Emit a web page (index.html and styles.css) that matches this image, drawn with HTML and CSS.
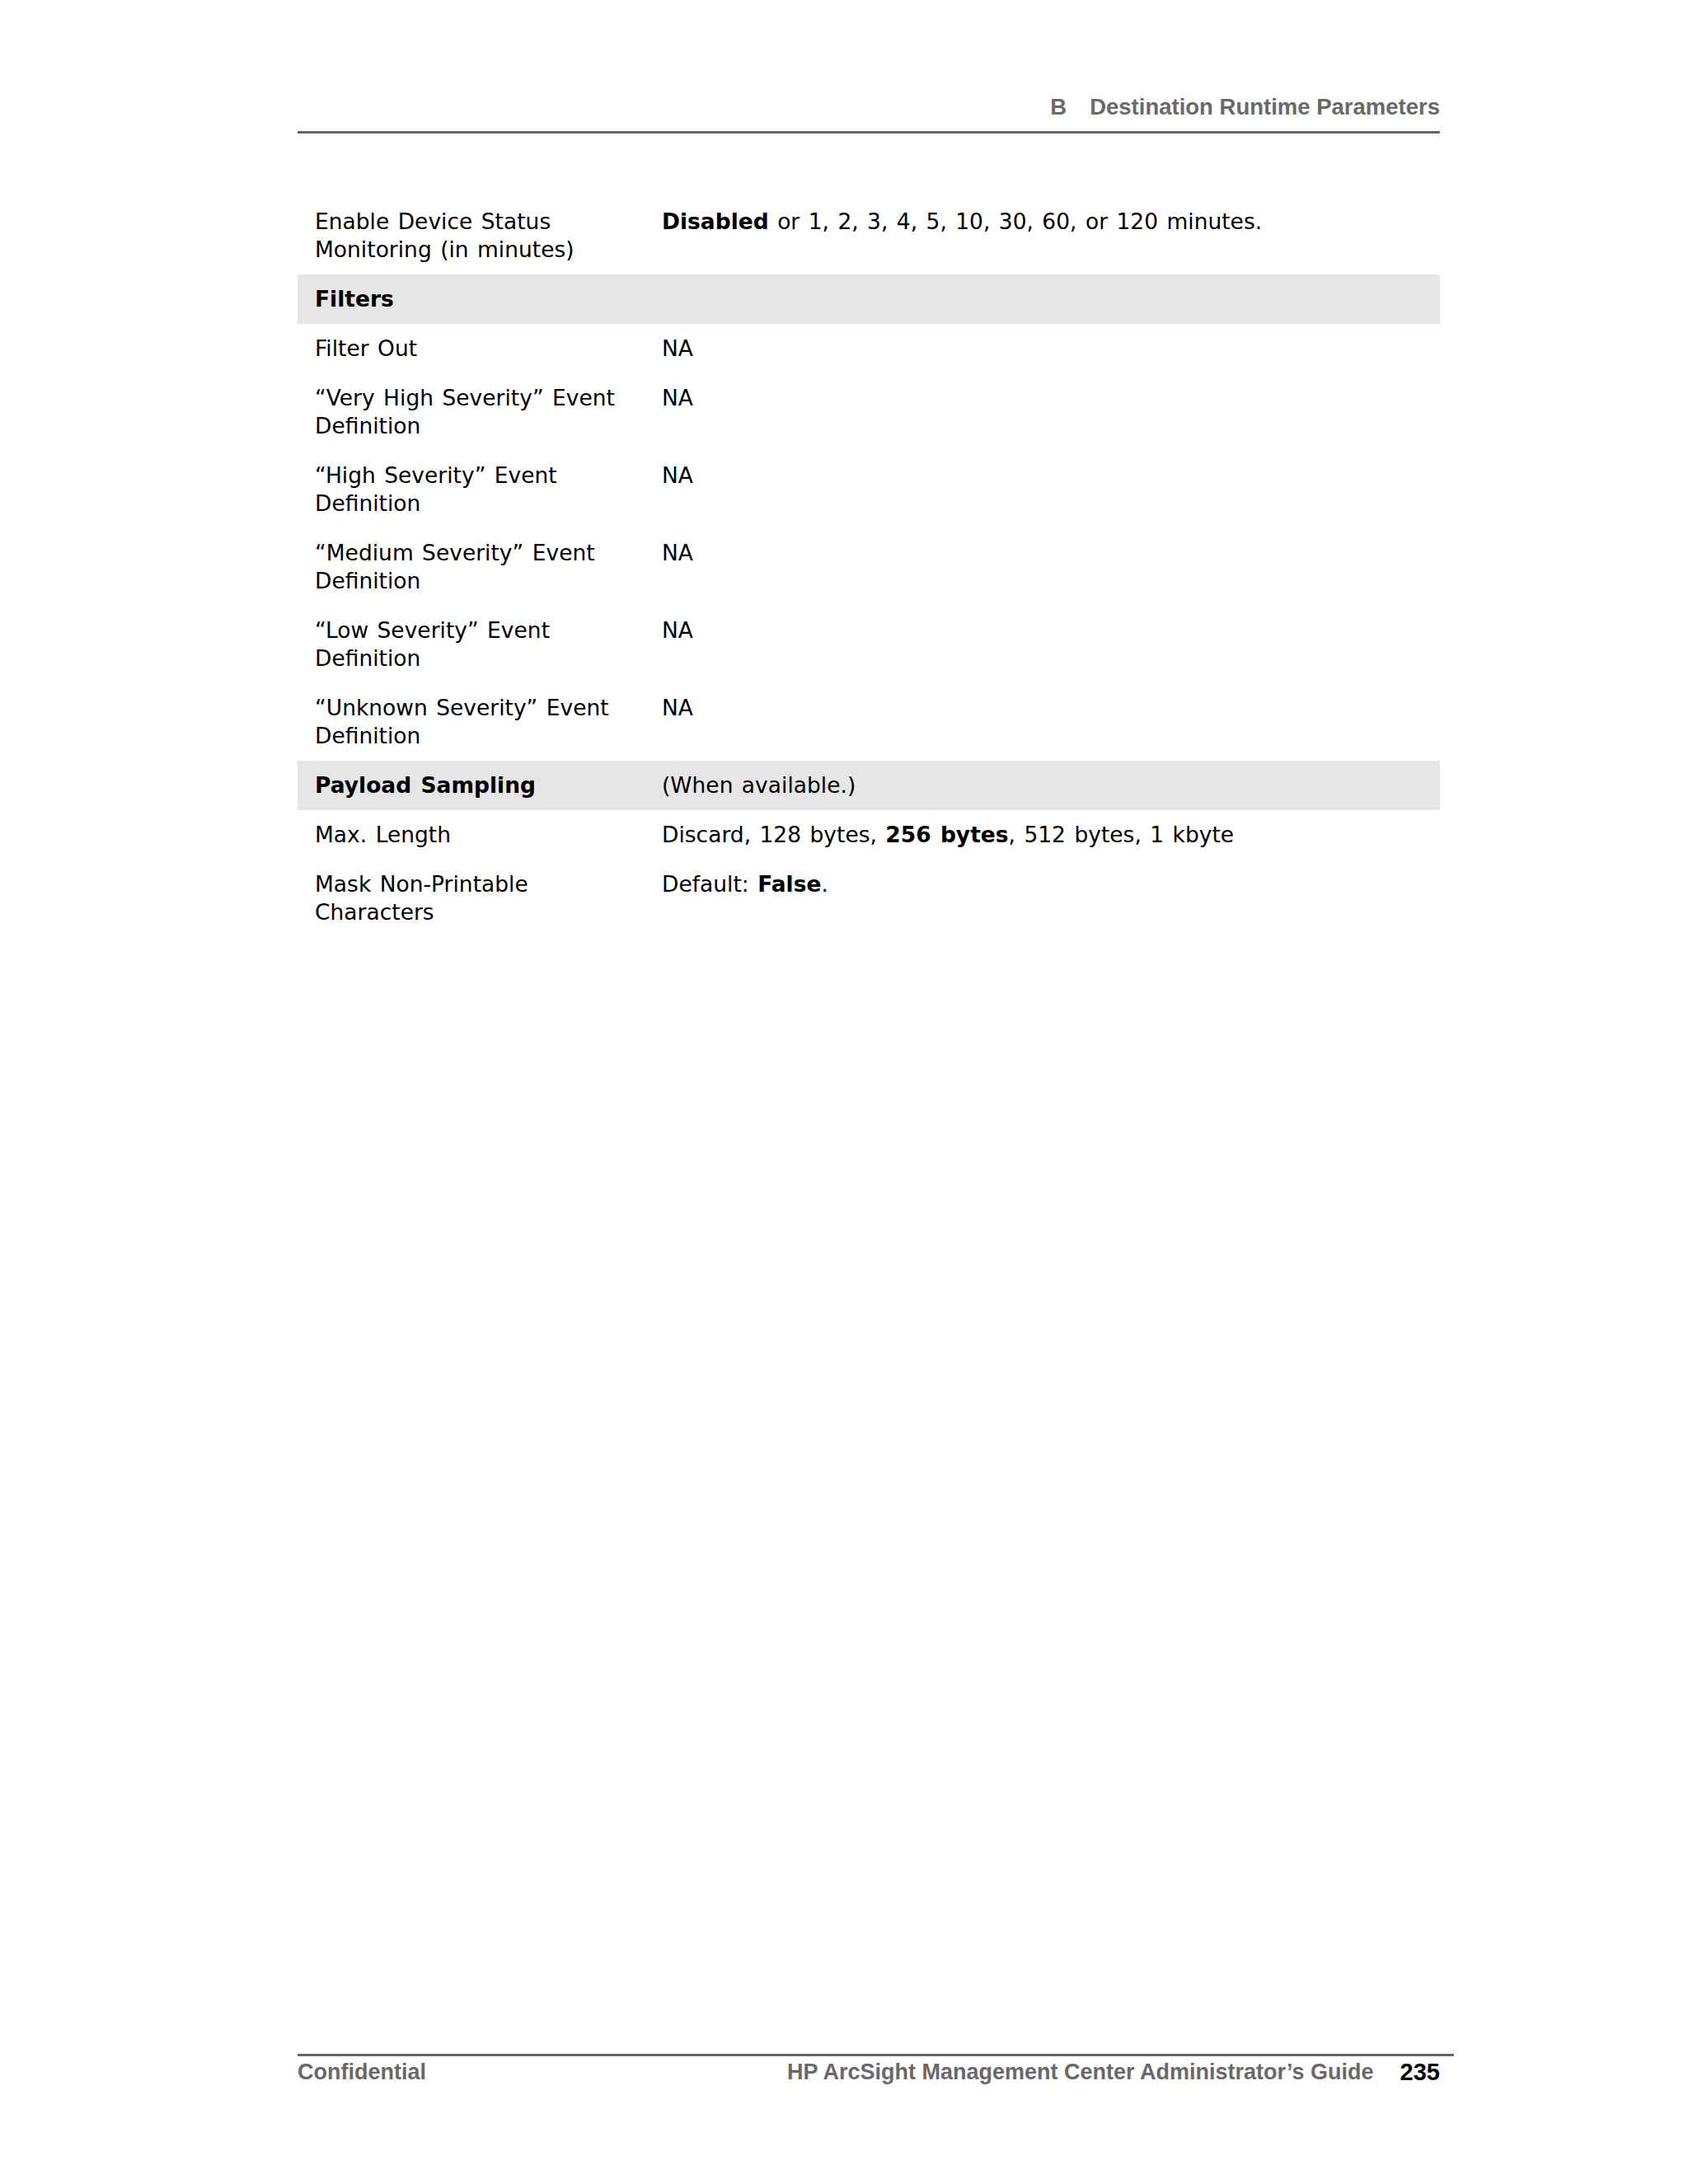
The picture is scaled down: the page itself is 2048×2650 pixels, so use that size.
FILE: index.html
```html
<!DOCTYPE html>
<html lang="en">
<head>
<meta charset="utf-8">
<title>B Destination Runtime Parameters</title>
<link rel="stylesheet" href="styles.css">
</head>
<body>
<div class="page">
  <header class="running-head">
    <span class="chap">B</span>
    <span class="chap-title">Destination Runtime Parameters</span>
  </header>

  <div class="param-table">
    <div class="row">
      <div class="cell">Enable Device Status Monitoring (in minutes)</div>
      <div class="cell"><b>Disabled</b> or 1, 2, 3, 4, 5, 10, 30, 60, or 120 minutes.</div>
    </div>
    <div class="row section">
      <div class="cell"><b>Filters</b></div>
      <div class="cell"></div>
    </div>
    <div class="row">
      <div class="cell">Filter Out</div>
      <div class="cell">NA</div>
    </div>
    <div class="row">
      <div class="cell">“Very High Severity” Event Definition</div>
      <div class="cell">NA</div>
    </div>
    <div class="row">
      <div class="cell">“High Severity” Event Definition</div>
      <div class="cell">NA</div>
    </div>
    <div class="row">
      <div class="cell">“Medium Severity” Event Definition</div>
      <div class="cell">NA</div>
    </div>
    <div class="row">
      <div class="cell">“Low Severity” Event Definition</div>
      <div class="cell">NA</div>
    </div>
    <div class="row">
      <div class="cell">“Unknown Severity” Event Definition</div>
      <div class="cell">NA</div>
    </div>
    <div class="row section">
      <div class="cell"><b>Payload Sampling</b></div>
      <div class="cell">(When available.)</div>
    </div>
    <div class="row">
      <div class="cell">Max. Length</div>
      <div class="cell">Discard, 128 bytes, <b>256 bytes</b>, 512 bytes, 1 kbyte</div>
    </div>
    <div class="row">
      <div class="cell">Mask Non-Printable Characters</div>
      <div class="cell">Default: <b>False</b>.</div>
    </div>
  </div>

  <footer class="running-foot">
    <span class="conf">Confidential</span>
    <span class="guide">HP ArcSight Management Center Administrator’s Guide</span>
    <span class="folio">235</span>
  </footer>
</div>
</body>
</html>
```

FILE: styles.css
```css
html, body {
  margin: 0;
  padding: 0;
  background: #ffffff;
}

.page {
  box-sizing: border-box;
  width: 2048px;
  height: 2650px;
  padding: 113px 0 119px 361px;
  display: flex;
  flex-direction: column;
}

.running-head {
  width: 1386px;
  display: flex;
  justify-content: flex-end;
  align-items: center;
  gap: 28px;
  font-family: "Liberation Sans", Arial, sans-serif;
  font-weight: bold;
  font-size: 27.5px;
  line-height: 34px;
  color: #696969;
  padding-bottom: 12px;
  border-bottom: 3px solid #666666;
}

.param-table {
  width: 1386px;
  margin-top: 77px;
  font-family: "DejaVu Sans", Verdana, sans-serif;
  font-size: 26.5px;
  line-height: 34px;
  word-spacing: 2px;
  color: #000000;
}

.param-table b {
  font-weight: bold;
}

.row {
  display: grid;
  grid-template-columns: 421px 1fr;
}

.row.section {
  background: #e6e6e6;
}

.cell {
  padding: 13px 21px;
}

.row .cell:first-child {
  padding-right: 10px;
}

.running-foot {
  margin-top: auto;
  width: 1403px;
  box-sizing: border-box;
  padding: 2px 17px 0 0;
  border-top: 3px solid #666666;
  display: flex;
  align-items: center;
  font-family: "Liberation Sans", Arial, sans-serif;
  font-weight: bold;
  font-size: 27px;
  line-height: 34px;
  color: #696969;
}

.conf {
  flex: 1;
}

.guide {
  margin-right: 32px;
}

.folio {
  color: #000000;
  font-weight: bold;
  font-size: 29px;
}
```
